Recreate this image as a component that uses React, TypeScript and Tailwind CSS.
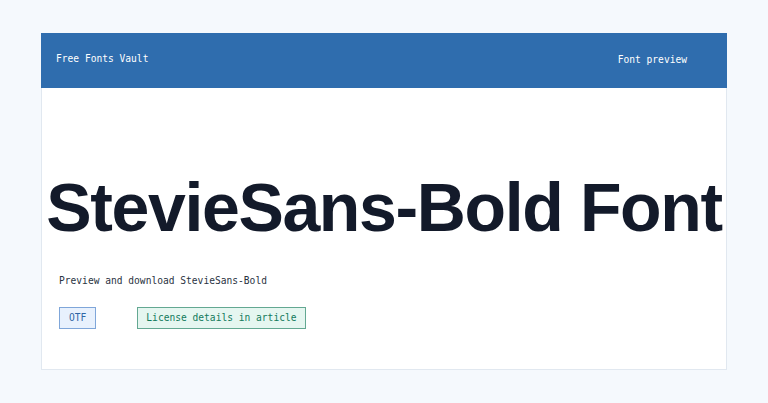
export default function App() {
  const mono = { fontFamily: '"DejaVu Sans Mono", "Liberation Mono", monospace' };
  return (
    <div className="min-h-[403px] bg-[#f5f9fd] pt-[33px]" style={mono}>
      <div className="mx-auto w-[686px] h-[337px] bg-white border border-[#e1e8f0] flex flex-col">
        {/* top bar */}
        <header className="h-[55px] -mx-px -mt-px bg-[#2f6dae] flex items-center justify-between pl-[15px] pr-[40px] text-white text-[9.6px]">
          <span className="-mt-[2px]">Free Fonts Vault</span>
          <span>Font preview</span>
        </header>

        <main className="flex-1 px-[17px]">
          <h1
            className="mt-[85px] -mx-[17px] text-center text-[68px] leading-none font-bold tracking-[-0.02em] text-[#131a2a] whitespace-nowrap"
            style={{ fontFamily: '"Liberation Sans", Arial, sans-serif' }}
          >
            StevieSans-Bold Font
          </h1>
          <p className="mt-[33px] text-[9.6px] text-[#2a3342]">Preview and download StevieSans-Bold</p>
          <div className="mt-[19px] flex items-center gap-[41px] text-[9.6px]">
            <span className="px-[9px] h-[22px] flex items-center border border-[#7fa6d9] bg-[#e8f1fd] text-[#2f66a6]">OTF</span>
            <span className="px-[8px] h-[22px] flex items-center border border-[#63a892] bg-[#e5f6f0] text-[#127a5c]">License details in article</span>
          </div>
        </main>
      </div>
    </div>
  );
}
